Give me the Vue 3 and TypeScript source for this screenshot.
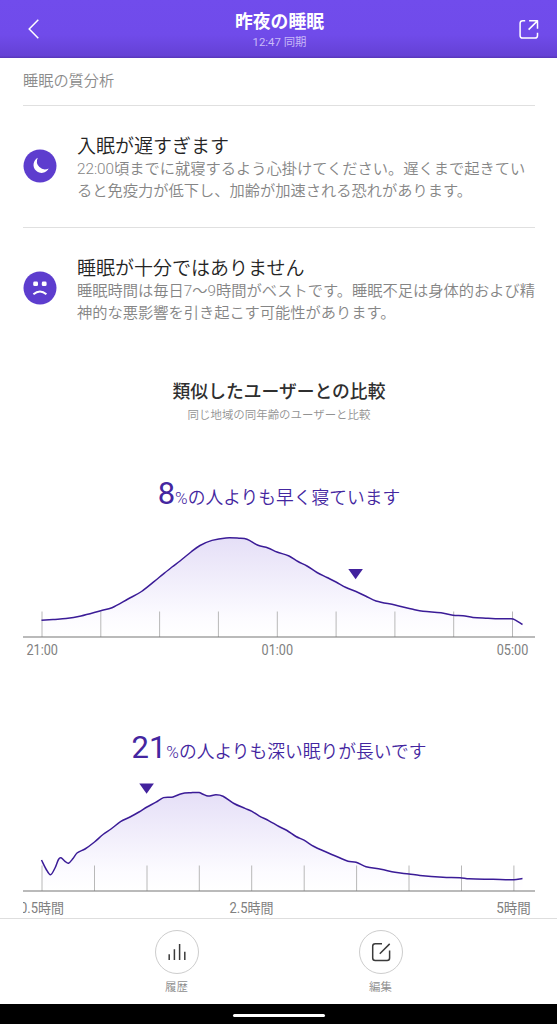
<script setup lang="ts">
type Point = [number, number]

interface Label {
  x: number
  text: string
  width: number
}

interface Chart {
  id: string
  percent: number
  caption: string
  marker: Point
  ticks: number[]
  labelY: number
  labels: Label[]
  points: Point[]
}

const advice = [
  {
    icon: 'moon',
    title: '入眠が遅すぎます',
    lines: ['22:00頃までに就寝するよう心掛けてください。遅くまで起きてい', 'ると免疫力が低下し、加齢が加速される恐れがあります。'],
  },
  {
    icon: 'sad',
    title: '睡眠が十分ではありません',
    lines: ['睡眠時間は毎日7〜9時間がベストです。睡眠不足は身体的および精', '神的な悪影響を引き起こす可能性があります。'],
  },
]

/* Coordinates are relative to the plot area; the baseline is at y = 117. */
const charts: Chart[] = [
  {
    id: 'bedtime',
    percent: 8,
    caption: 'の人よりも早く寝ています',
    marker: [332.6, 49],
    ticks: [19, 77.8, 136.6, 195.4, 254.3, 313.1, 371.9, 430.7, 489.5],
    labelY: 135.4,
    labels: [
      { x: 19.2, text: '21:00', width: 31.5 },
      { x: 254.3, text: '01:00', width: 31.5 },
      { x: 489.5, text: '05:00', width: 31.5 },
    ],
    points: [
      [18.5, 100.3], [30, 99.4], [43, 98.6], [58, 96], [77.8, 90.7], [89, 87.7], [105, 79], [118.5, 71.5], [136, 57.5], [149, 47],
      [157, 41], [168, 32], [177, 25.5], [189, 20.4], [203, 17.9], [216, 18.2], [224, 19.2], [235, 25.3],
      [245, 28], [254, 32], [266, 36], [275, 41.5], [284, 46], [294, 52.5], [304, 57.5], [313, 62], [323, 67.5],
      [333, 71.5], [343, 76.3], [353, 81], [372, 85], [390, 89.3], [400, 91.3], [418, 92.8], [430, 95.3],
      [440, 95.8], [450, 97.4], [465, 98.2], [475, 98.8], [488, 98.8], [492, 99.8], [499.5, 104.5],
    ],
  },
  {
    id: 'deep-sleep',
    percent: 21,
    caption: 'の人よりも深い眠りが長いです',
    marker: [123.6, 9.5],
    ticks: [19, 71.5, 124, 176.3, 228.7, 281.2, 333.6, 386, 438.5, 490.9],
    labelY: 138.5,
    labels: [
      { x: 19, text: '0.5時間', width: 44 },
      { x: 228.5, text: '2.5時間', width: 44 },
      { x: 490.5, text: '5時間', width: 34.5 },
    ],
    points: [
      [18.5, 86], [23, 95], [27.5, 100.8], [32, 94], [35.5, 85.5], [38, 83.8], [42, 87.3], [45.5, 89.2], [50, 84.5], [54, 79],
      [62, 75], [71.5, 68], [80, 60.5], [88, 55], [97.5, 47.7], [107, 43], [116, 38], [124, 33],
      [133, 28.2], [140.5, 23.6], [150, 22.9], [158.5, 19.7], [168, 18.7], [176, 18.5], [180, 20.2], [185, 22],
      [193, 20.8], [200, 22.2], [211, 29.5], [222, 34.4], [229, 37.3], [236, 41.8], [246, 46.8], [256, 52.5],
      [264, 56.5], [273, 62.5], [281, 66.2], [291, 72.5], [302, 77.5], [316, 83.5], [325, 87.2], [333, 88.2], [343, 92.8],
      [358, 95.2], [372, 98.3], [386, 100], [397, 101.5], [420, 103.2], [437, 103.7], [446, 104.8],
      [470, 105.3], [491, 105.8], [499.5, 104.5],
    ],
  },
]

function curve(points: Point[]): string {
  let d = `M${points[0].join(' ')}`
  for (let i = 0; i < points.length - 1; i++) {
    const a = points[Math.max(0, i - 1)]
    const b = points[i]
    const c = points[i + 1]
    const e = points[Math.min(points.length - 1, i + 2)]
    const third = (c[0] - b[0]) / 3
    const slopeB = (c[1] - a[1]) / (c[0] - a[0])
    const slopeC = (e[1] - b[1]) / (e[0] - b[0])
    d += `C${b[0] + third} ${b[1] + slopeB * third} ${c[0] - third} ${c[1] - slopeC * third} ${c[0]} ${c[1]}`
  }
  return d
}

function area(points: Point[]): string {
  return `${curve(points)}V117H${points[0][0]}Z`
}
</script>

<template>
  <div class="screen">
    <header class="header">
      <svg class="back" viewBox="0 0 24 24"><path d="M16.3 2.7 7.2 12l9.1 9.3" /></svg>
      <div class="heading">
        <h1>昨夜の睡眠</h1>
        <p>12:47 同期</p>
      </div>
      <svg class="share" viewBox="0 0 24 24">
        <path d="M8.2 3.8H5.7Q3.1 3.8 3.1 6.4v12Q3.1 21 5.7 21h12.2q2.6 0 2.6-2.6v-2.7M12.1 3.8h8.4v8M20.2 4.1l-8.6 8.5" />
      </svg>
    </header>

    <main class="content">
      <h2 class="section">睡眠の質分析</h2>
      <article v-for="item in advice" :key="item.icon" class="advice">
        <svg class="badge" viewBox="0 0 34 34">
          <circle cx="17" cy="17" r="16.5" />
          <path v-if="item.icon === 'moon'" class="solid" d="M14.8 8.8a8 8 0 1 0 10.9 10.6A8 8 0 0 1 14.8 8.8Z" />
          <g v-else>
            <rect class="solid" x="10.2" y="10.5" width="4.8" height="4.6" rx="1.4" />
            <rect class="solid" x="18.8" y="10.5" width="4.8" height="4.6" rx="1.4" />
            <path class="mouth" d="M10.4 23.3q6.6-5.8 13 0" />
          </g>
        </svg>
        <div class="advice-text">
          <h3>{{ item.title }}</h3>
          <p v-for="line in item.lines" :key="line">{{ line }}</p>
        </div>
      </article>

      <section class="compare">
        <h2>類似したユーザーとの比較</h2>
        <p>同じ地域の同年齢のユーザーと比較</p>
      </section>

      <section v-for="chart in charts" :key="chart.id" class="chart">
        <h3><span class="number">{{ chart.percent }}</span><span class="sign">%</span>{{ chart.caption }}</h3>
        <svg class="plot" width="512" height="148" viewBox="0 0 512 148">
          <defs>
            <linearGradient :id="chart.id" x1="0" y1="0" x2="0" y2="1">
              <stop offset="0" stop-color="#e5dff7" />
              <stop offset="0.8" stop-color="#fcfbff" />
              <stop offset="1" stop-color="#ffffff" />
            </linearGradient>
          </defs>
          <path :d="area(chart.points)" :fill="`url(#${chart.id})`" />
          <path v-for="x in chart.ticks" :key="x" class="tick" :d="`M${x} 91.5V117`" />
          <path class="axis" d="M0 117H512" />
          <path class="line" :d="curve(chart.points)" />
          <path class="marker" :d="`M${chart.marker[0] - 7.3} ${chart.marker[1]}h14.6l-7.3 10.3Z`" />
          <text
            v-for="label in chart.labels"
            :key="label.text"
            :x="label.x"
            :y="chart.labelY"
            :textLength="label.width"
            lengthAdjust="spacingAndGlyphs"
          >{{ label.text }}</text>
        </svg>
      </section>
    </main>

    <nav class="actions">
      <button type="button">
        <span class="round">
          <svg viewBox="0 0 24 24"><path d="M4.2 14.2v5.7M9.4 9.2v10.7M14.6 4v15.9M19.8 11.7v8.2" /></svg>
        </span>
        履歴
      </button>
      <button type="button">
        <span class="round">
          <svg viewBox="0 0 24 24"><path d="M13 3.7H6.2Q3.7 3.7 3.7 6.2v11.9q0 2.5 2.5 2.5h11.9q2.5 0 2.5-2.5v-7.6M20.7 3.9 10.8 13.7" /></svg>
        </span>
        編集
      </button>
    </nav>
    <div class="system"><span /></div>
  </div>
</template>

<style>
body {
  margin: 0;
  background: #fff;
}
</style>

<style scoped>
.screen {
  display: flex;
  flex-direction: column;
  width: 557px;
  height: 1024px;
  overflow: hidden;
  background: #fff;
  font-family: Roboto, "Noto Sans CJK JP", sans-serif;
}

h1, h2, h3, p {
  margin: 0;
  font-weight: 400;
  white-space: nowrap;
}

.header {
  flex: none;
  box-sizing: border-box;
  display: flex;
  justify-content: space-between;
  height: 58px;
  padding: 9px 16px 0 22px;
  background: linear-gradient(#714cec 0%, #704bea 60%, #6541d5 96%, #5635b8 100%);
  color: #fff;
  text-align: center;
}

.back, .share {
  width: 24px;
  height: 24px;
  margin-top: 8px;
  fill: none;
  stroke: #fff;
  stroke-width: 1.5;
}

.share {
  stroke-linejoin: round;
}

.heading {
  padding-right: 4px;
}

.heading h1 {
  font-size: 17.8px;
  font-weight: 700;
  line-height: 26px;
}

.heading p {
  color: #c9b9f8;
  font-size: 11.4px;
  line-height: 15px;
}

.content {
  flex: 1;
  min-height: 0;
  padding: 0 22px 0 23px;
  overflow: hidden;
}

.section {
  box-sizing: border-box;
  height: 47px;
  padding-top: 2px;
  color: #8b8b8b;
  font-size: 15.2px;
  font-weight: 350;
  line-height: 43px;
}

.advice {
  display: flex;
  align-items: center;
  box-sizing: border-box;
  height: 122px;
  border-top: 1px solid #e0e0e0;
}

.badge {
  flex: none;
  width: 34px;
  height: 34px;
  margin: 0 20.5px 1px -0.5px;
  fill: #5d3dce;
}

.badge .solid {
  fill: #fff;
}

.badge .mouth {
  fill: none;
  stroke: #fff;
  stroke-width: 1.9;
}

.advice-text {
  padding-top: 3px;
}

.advice h3 {
  position: relative;
  top: 1px;
  color: #242424;
  font-size: 19px;
  font-weight: 350;
  line-height: 24px;
}

.advice p {
  color: #858585;
  font-size: 15.25px;
  font-weight: 350;
  line-height: 22px;
}

.compare {
  height: 105px;
  padding-top: 30px;
  box-sizing: border-box;
  text-align: center;
}

.compare h2 {
  color: #2f2f2f;
  font-size: 17.8px;
  font-weight: 500;
  line-height: 26px;
}

.compare p {
  color: #929292;
  font-size: 11.45px;
  font-weight: 350;
  line-height: 20px;
}

.chart {
  height: 254px;
}

.chart h3 {
  box-sizing: border-box;
  height: 66px;
  padding-top: 19px;
  color: #4426a0;
  font-size: 17.75px;
  font-weight: 350;
  line-height: 42px;
  text-align: center;
}

.number {
  font-size: 31px;
  font-weight: 400;
}

.sign {
  font-size: 17px;
  font-weight: 350;
}

.plot {
  display: block;
  overflow: hidden;
}

.tick {
  stroke: #b8b8b8;
  stroke-width: 1;
}

.axis {
  stroke: #777;
  stroke-width: 1.2;
}

.line {
  fill: none;
  stroke: #3b1c97;
  stroke-width: 1.5;
}

.marker {
  fill: #42229d;
}

.plot text {
  fill: #808080;
  font-size: 14.2px;
  font-weight: 400;
  text-anchor: middle;
}

.actions {
  flex: none;
  display: flex;
  justify-content: center;
  gap: 160px;
  box-sizing: border-box;
  height: 86px;
  padding-top: 11px;
  border-top: 1px solid #dedede;
  background: #fff;
}

.actions button {
  display: flex;
  flex-direction: column;
  align-items: center;
  width: 44px;
  padding: 0;
  border: 0;
  background: none;
  color: #8d8d8d;
  font: 350 11.4px/26px Roboto, "Noto Sans CJK JP", sans-serif;
}

.round {
  display: grid;
  place-items: center;
  box-sizing: border-box;
  width: 44px;
  height: 44px;
  border: 1px solid #cdcdcd;
  border-radius: 50%;
}

.round svg {
  width: 24px;
  height: 24px;
  fill: none;
  stroke: #3b3b3b;
  stroke-width: 1.5;
}

.system {
  flex: none;
  display: flex;
  justify-content: center;
  height: 20px;
  background: #000;
}

.system span {
  width: 92px;
  height: 3px;
  margin-top: 10px;
  border-radius: 2px;
  background: #fff;
}
</style>
